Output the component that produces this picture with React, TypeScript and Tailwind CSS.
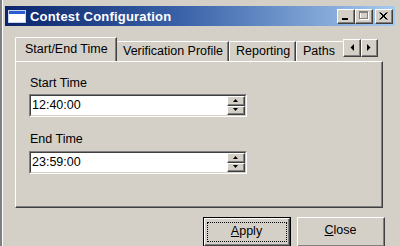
import React from "react";

function Raised({ className = "", children }: { className?: string; children?: React.ReactNode }) {
  // classic 3D raised edge: light top/left, dark bottom/right
  return (
    <div className={`border-t border-l border-[#ffffff] border-r border-b border-r-[#404040] border-b-[#404040] ${className}`}>
      <div className="w-full h-full border-r border-b border-[#808080] flex items-center justify-center">{children}</div>
    </div>
  );
}

function TimeInput({ value }: { value: string }) {
  return (
    <div className="w-[218px] h-[23px] border-t border-l border-[#808080] border-r border-b border-r-white border-b-white">
      <div className="w-full h-full border-t border-l border-[#404040] border-r border-b border-r-[#d4d0c8] border-b-[#d4d0c8] bg-white flex">
        <div className="flex-1 pl-[1px] leading-[19px]">{value}</div>
        <div className="w-[18px] flex flex-col bg-[#d4d0c8]">
          <Raised className="flex-1">
            <svg width="5" height="3" viewBox="0 0 5 3"><path d="M2.5 0 L5 3 L0 3 Z" fill="#000" /></svg>
          </Raised>
          <Raised className="flex-1">
            <svg width="5" height="3" viewBox="0 0 5 3"><path d="M0 0 L5 0 L2.5 3 Z" fill="#000" /></svg>
          </Raised>
        </div>
      </div>
    </div>
  );
}

export default function App() {
  const tabs = ["Verification Profile", "Reporting", "Paths"];

  return (
    <div className="w-[400px] h-[246px] overflow-hidden bg-[#d4d0c8] text-black text-[12.5px] font-['Liberation_Sans',Arial,sans-serif]">
      <div className="h-full border-l-2 border-[#808080]">
        <div className="h-full border-l border-white pl-[2px] pr-[5px] pt-[6px]">
          {/* Title bar */}
          <div className="h-[20px] flex items-center bg-[linear-gradient(90deg,#0a246a_0%,#3a62a8_45%,#a6caf0_100%)] pl-[3px] pr-[2px]">
            <svg width="18" height="13" viewBox="0 0 18 13" className="shrink-0">
              <rect x="0.5" y="0.5" width="17" height="12" fill="#fff" stroke="#c8d4ec" />
              <rect x="1" y="1" width="16" height="3" fill="#2a5bd0" />
            </svg>
            <div className="ml-[4px] text-white font-bold text-[13px] leading-none tracking-[0.2px]">Contest Configuration</div>
            <div className="ml-auto flex items-center">
              <Raised className="w-[18px] h-[15px] bg-[#d4d0c8]">
                <svg width="8" height="8" viewBox="0 0 8 8"><rect x="0" y="6" width="6" height="2" fill="#000" /></svg>
              </Raised>
              <Raised className="w-[18px] h-[15px] bg-[#d4d0c8]">
                <svg width="10" height="9" viewBox="0 0 10 9">
                  <rect x="1.5" y="1.5" width="8" height="7" fill="none" stroke="#fff" />
                  <rect x="0.5" y="0.5" width="8" height="7" fill="none" stroke="#808080" />
                  <rect x="0.5" y="1" width="8" height="1" fill="#808080" />
                </svg>
              </Raised>
              <Raised className="ml-[2px] w-[18px] h-[15px] bg-[#d4d0c8]">
                <svg width="9" height="8" viewBox="0 0 9 8">
                  <path d="M0.5 0.5 L7.5 7.5 M1.5 0.5 L8.5 7.5 M7.5 0.5 L0.5 7.5 M8.5 0.5 L1.5 7.5" stroke="#000" strokeWidth="1" />
                </svg>
              </Raised>
            </div>
          </div>

          {/* Tab control */}
          <div className="ml-[10px] mr-[12px] mt-[11px]">
            <div className="flex items-end h-[24px]">
              <div className="flex items-end flex-1 overflow-hidden h-full">
                <div className="relative z-10 w-[102px] h-[25px] shrink-0 border-t border-l border-white rounded-tl-[2px] border-r border-r-[#404040] bg-[#d4d0c8] -mb-[1px]">
                  <div className="h-full border-r border-[#808080] pl-[9px] pt-[4px] leading-[15px]">Start/End Time</div>
                </div>
                {tabs.map((t, i) => (
                  <div
                    key={t}
                    className={`h-[20px] shrink-0 border-t border-l border-white rounded-tl-[2px] border-r border-r-[#404040] ${
                      i === 0 ? "w-[112px] border-l-0" : i === 1 ? "w-[67px]" : "w-[60px]"
                    }`}
                  >
                    <div className="h-full border-r border-[#808080] pl-[6px] pt-[2px] leading-[15px] whitespace-nowrap">{t}</div>
                  </div>
                ))}
              </div>
              <div className="flex self-start mt-[2px] mr-[5px]">
                <Raised className="w-[18px] h-[18px] bg-[#d4d0c8]">
                  <svg width="4" height="7" viewBox="0 0 4 7"><path d="M4 0 L4 7 L0.5 3.5 Z" fill="#000" /></svg>
                </Raised>
                <Raised className="w-[17px] h-[18px] bg-[#d4d0c8]">
                  <svg width="4" height="7" viewBox="0 0 4 7"><path d="M0 0 L0 7 L3.5 3.5 Z" fill="#000" /></svg>
                </Raised>
              </div>
            </div>

            {/* Tab panel */}
            <div className="h-[147px] border-t border-l border-white border-r border-b border-r-[#404040] border-b-[#404040]">
              <div className="h-full border-r border-b border-[#808080] pl-[13px] pt-[14px]">
                <div className="leading-[15px] pl-[1px] mb-[3px]">Start Time</div>
                <TimeInput value="12:40:00" />
                <div className="leading-[15px] pl-[1px] mt-[15px] mb-[4px]">End Time</div>
                <TimeInput value="23:59:00" />
              </div>
            </div>
          </div>

          {/* Buttons */}
          <div className="flex justify-end gap-[6px] mt-[9px] pr-[10px]">
            <div className="w-[88px] h-[30px] border border-black">
              <Raised className="w-full h-full bg-[#d4d0c8]">
                <div className="w-[80px] h-[20px] border border-dotted border-black flex items-center justify-center">
                  <span><span className="underline">A</span>pply</span>
                </div>
              </Raised>
            </div>
            <Raised className="w-[88px] h-[30px] bg-[#d4d0c8]">
              <span className="-mt-[2px]"><span className="underline">C</span>lose</span>
            </Raised>
          </div>
        </div>
      </div>
    </div>
  );
}
